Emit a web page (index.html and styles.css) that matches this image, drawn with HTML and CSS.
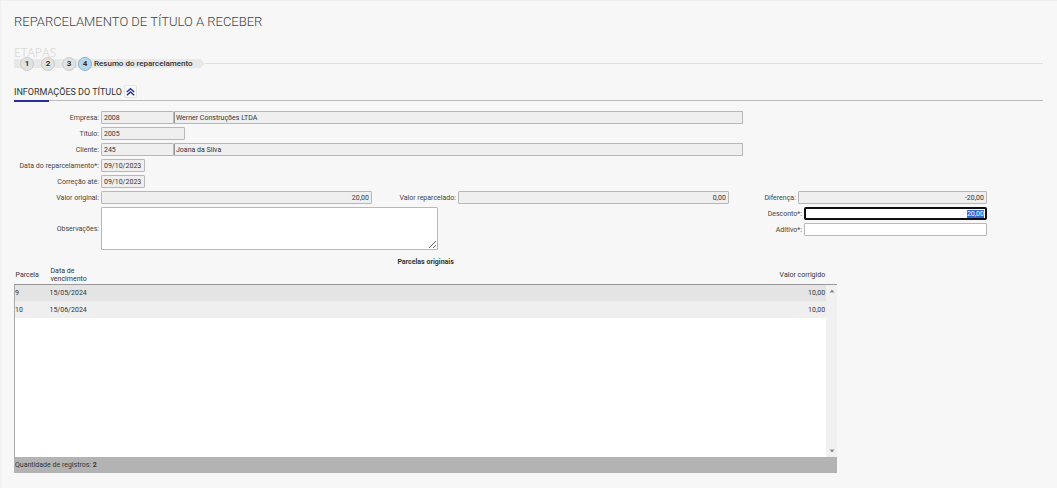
FILE: index.html
```html
<!DOCTYPE html>
<html lang="pt-BR">
  <head>
    <meta charset="UTF-8" />
    <meta name="viewport" content="width=device-width, initial-scale=1.0" />
    <title>Reparcelamento de título a receber</title>
    <link rel="stylesheet" href="styles.css">
  </head>
  <body>
    <main class="page">
      <h1 class="page-title">REPARCELAMENTO DE TÍTULO A RECEBER</h1>

      <nav class="steps">
        <span class="steps-title">ETAPAS</span>
        <div class="steps-track">
          <ol class="steps-list">
            <li class="step">1</li>
            <li class="step">2</li>
            <li class="step">3</li>
            <li class="step step-active">4</li>
            <li class="step-name">Resumo do reparcelamento</li>
          </ol>
          <span class="steps-line"></span>
        </div>
      </nav>

      <header class="section-header">
        <h2>INFORMAÇÕES DO TÍTULO</h2>
        <button type="button" class="collapse" aria-label="Recolher">
          <svg viewBox="0 0 12 12" width="12" height="12" fill="none" stroke="#29309a" stroke-width="1.6">
            <path d="M2 6 L6 2.5 L10 6" />
            <path d="M2 9.5 L6 6 L10 9.5" />
          </svg>
        </button>
      </header>

      <form class="form">
        <div class="row">
          <label for="empresa">Empresa:</label>
          <div class="pair">
            <input class="code" type="text" id="empresa" value="2008" readonly />
            <input class="name" type="text" aria-label="Nome da empresa" value="Werner Construções LTDA" readonly />
          </div>
        </div>
        <div class="row">
          <label for="titulo">Título:</label>
          <input class="title-code" type="text" id="titulo" value="2005" readonly />
        </div>
        <div class="row">
          <label for="cliente">Cliente:</label>
          <div class="pair">
            <input class="code" type="text" id="cliente" value="245" readonly />
            <input class="name" type="text" aria-label="Nome do cliente" value="Joana da Silva" readonly />
          </div>
        </div>
        <div class="row">
          <label for="data">Data do reparcelamento*:</label>
          <input class="date" type="text" id="data" value="09/10/2023" readonly />
        </div>
        <div class="row">
          <label for="correcao">Correção até:</label>
          <input class="date" type="text" id="correcao" value="09/10/2023" readonly />
        </div>
        <div class="row">
          <label for="original">Valor original:</label>
          <input class="money" type="text" id="original" value="20,00" readonly />
          <label class="label-middle" for="reparcelado">Valor reparcelado:</label>
          <input class="money" type="text" id="reparcelado" value="0,00" readonly />
          <label class="label-short" for="diferenca">Diferença:</label>
          <input class="money money-small" type="text" id="diferenca" value="-20,00" readonly />
        </div>
        <div class="row row-notes">
          <label for="observacoes">Observações:</label>
          <textarea id="observacoes"></textarea>
          <div class="adjustments">
            <div class="row">
              <label for="desconto">Desconto*:</label>
              <input class="adjust" type="text" id="desconto" value="20,00" />
            </div>
            <div class="row">
              <label for="aditivo">Aditivo*:</label>
              <input class="adjust" type="text" id="aditivo" />
            </div>
          </div>
        </div>
      </form>

      <section class="grid">
        <h3 id="grid-title">Parcelas originais</h3>
        <div class="grid-area">
          <table aria-labelledby="grid-title">
            <thead>
              <tr>
                <th class="col-number">Parcela</th>
                <th class="col-date">Data de vencimento</th>
                <th class="col-value">Valor corrigido</th>
                <th class="col-scroll"></th>
              </tr>
            </thead>
            <tbody>
              <tr>
                <td>9</td>
                <td>15/05/2024</td>
                <td class="col-value">10,00</td>
                <td class="col-scroll"></td>
              </tr>
              <tr>
                <td>10</td>
                <td>15/06/2024</td>
                <td class="col-value">10,00</td>
                <td class="col-scroll"></td>
              </tr>
            </tbody>
          </table>
          <div class="grid-rest"></div>
          <div class="scrollbar">
            <svg viewBox="0 0 6 4" width="6" height="4"><path d="M0.5 3.5 L3 0.5 L5.5 3.5 Z" fill="#8c8c8c" /></svg>
            <svg viewBox="0 0 6 4" width="6" height="4"><path d="M0.5 0.5 L3 3.5 L5.5 0.5 Z" fill="#8c8c8c" /></svg>
          </div>
        </div>
        <footer class="grid-footer">Quantidade de registros: <b>2</b></footer>
      </section>
    </main>

    <script>
      const desconto = document.getElementById("desconto");
      desconto.focus();
      desconto.select();
    </script>
  </body>
</html>
```

FILE: styles.css
```css
* {
  box-sizing: border-box;
}
body {
  margin: 0;
  background: #f7f7f7;
  color: #333;
  font-family: Roboto, "Liberation Sans", sans-serif;
  font-size: 7px;
  line-height: 8px;
}
.page {
  min-height: 100vh;
  padding: 14px 14px 0 13px;
  border-top: 1px solid #efefef;
  border-left: 1px solid #efefef;
}
.page-title {
  margin: 0;
  font-size: 13px;
  font-weight: 300;
  line-height: 14px;
  color: #444;
}
.steps {
  margin-top: 17px;
}
.steps-title {
  display: block;
  font-family: "Open Sans", sans-serif;
  font-size: 12px;
  line-height: 13px;
  color: #dedede;
}
.steps-track {
  display: flex;
  align-items: center;
  height: 9px;
}
.steps-list {
  position: relative;
  display: flex;
  align-items: center;
  gap: 7px;
  height: 9px;
  margin: 0;
  padding: 0 12px 0 6px;
  list-style: none;
}
.steps-list::before {
  content: "";
  position: absolute;
  inset: 0;
  z-index: -1;
  background: #e8e8e8;
  clip-path: polygon(0 0, calc(100% - 4px) 0, 100% 50%, calc(100% - 4px) 100%, 0 100%);
}
.step {
  width: 14px;
  height: 14px;
  border: 1px solid #ccc;
  border-radius: 50%;
  background: #e2e2e2;
  font-size: 8px;
  font-weight: 700;
  line-height: 12px;
  text-align: center;
}
.step-active {
  margin-left: -5px;
  border-color: #8fb4cc;
  background: #b5d8ee;
}
.step-name {
  margin-left: -5px;
  font-size: 8px;
  font-weight: 500;
}
.steps-line {
  flex: 1;
  height: 1px;
  background: #e0e0e0;
}
.section-header {
  display: flex;
  align-items: center;
  gap: 2px;
  height: 18px;
  margin-top: 15px;
  border-bottom: 1px solid #bbb;
  position: relative;
}
.section-header::after {
  content: "";
  position: absolute;
  left: 0;
  bottom: -2px;
  width: 35px;
  height: 2px;
  background: #29309a;
}
.section-header h2 {
  margin: 0;
  font-size: 9px;
  font-weight: 400;
  line-height: 12px;
}
.collapse {
  display: flex;
  align-items: center;
  justify-content: center;
  width: 13px;
  height: 13px;
  padding: 0;
  border: 1px solid #e3e3e3;
  border-radius: 2px;
  background: #fafafa;
}
.form {
  display: flex;
  flex-direction: column;
  gap: 3px;
  margin-top: 10px;
  padding-right: 56px;
}
.row {
  display: flex;
  align-items: center;
  gap: 2px;
}
.row label {
  flex: none;
  width: 85px;
  text-align: right;
  white-space: nowrap;
  color: #444;
}
.row .label-middle {
  width: 82px;
}
.row .label-short {
  width: 65px;
}
.pair {
  display: flex;
  width: 642px;
}
input,
textarea {
  min-width: 0;
  height: 13px;
  margin: 0;
  padding: 0 2px;
  border: 1px solid #b8b8b8;
  border-radius: 1px;
  background: #fff;
  color: #333;
  font: inherit;
}
input:read-only {
  background: #efefef;
}
input:focus {
  border-radius: 2px;
  outline: 2px solid #111;
  outline-offset: -2px;
}
input::selection {
  background: #3367d1;
  color: #fff;
}
.code {
  width: 73px;
}
.name {
  flex: 1;
  padding-left: 1px;
  border-left-color: #999;
}
.title-code {
  width: 84px;
}
.date {
  width: 44px;
}
.money {
  flex: 272 1 0;
  text-align: right;
}
.money-small {
  flex-grow: 188;
}
.row-notes {
  align-items: stretch;
}
.row-notes > label {
  align-self: center;
}
textarea {
  display: block;
  width: 337px;
  height: 43px;
  resize: both;
}
.adjustments {
  display: flex;
  flex-direction: column;
  gap: 3px;
  margin-left: auto;
}
.adjust {
  width: 183px;
  text-align: right;
}
.grid {
  width: 80%;
  margin-top: 8px;
}
.grid h3 {
  margin: 0;
  font-size: 7px;
  font-weight: 700;
  line-height: 8px;
  text-align: center;
}
.grid-area {
  position: relative;
}
table {
  width: 100%;
  border-collapse: collapse;
  table-layout: fixed;
}
th {
  height: 18px;
  padding: 1px 1px 0;
  font-weight: 400;
  text-align: left;
}
td {
  height: 17px;
  padding: 0 1px 0 0;
}
thead {
  border-bottom: 1px solid #999;
}
tbody tr {
  background: #efefef;
}
tbody tr:first-child {
  background: #e4e4e4;
}
.col-number {
  width: 35px;
}
.col-date {
  width: 48px;
}
.col-value {
  text-align: right;
}
.col-scroll {
  width: 11px;
}
.grid-rest {
  height: 139px;
  background: #fff;
}
.grid-area tbody,
.grid-rest {
  border-left: 1px solid #aaa;
}
.scrollbar {
  position: absolute;
  top: 19px;
  right: 0;
  bottom: 0;
  display: flex;
  flex-direction: column;
  align-items: center;
  justify-content: space-between;
  width: 11px;
  padding: 4px 0;
  background: #f1f1f1;
}
.grid-footer {
  padding: 4px 1px;
  background: #b3b3b3;
}
```
